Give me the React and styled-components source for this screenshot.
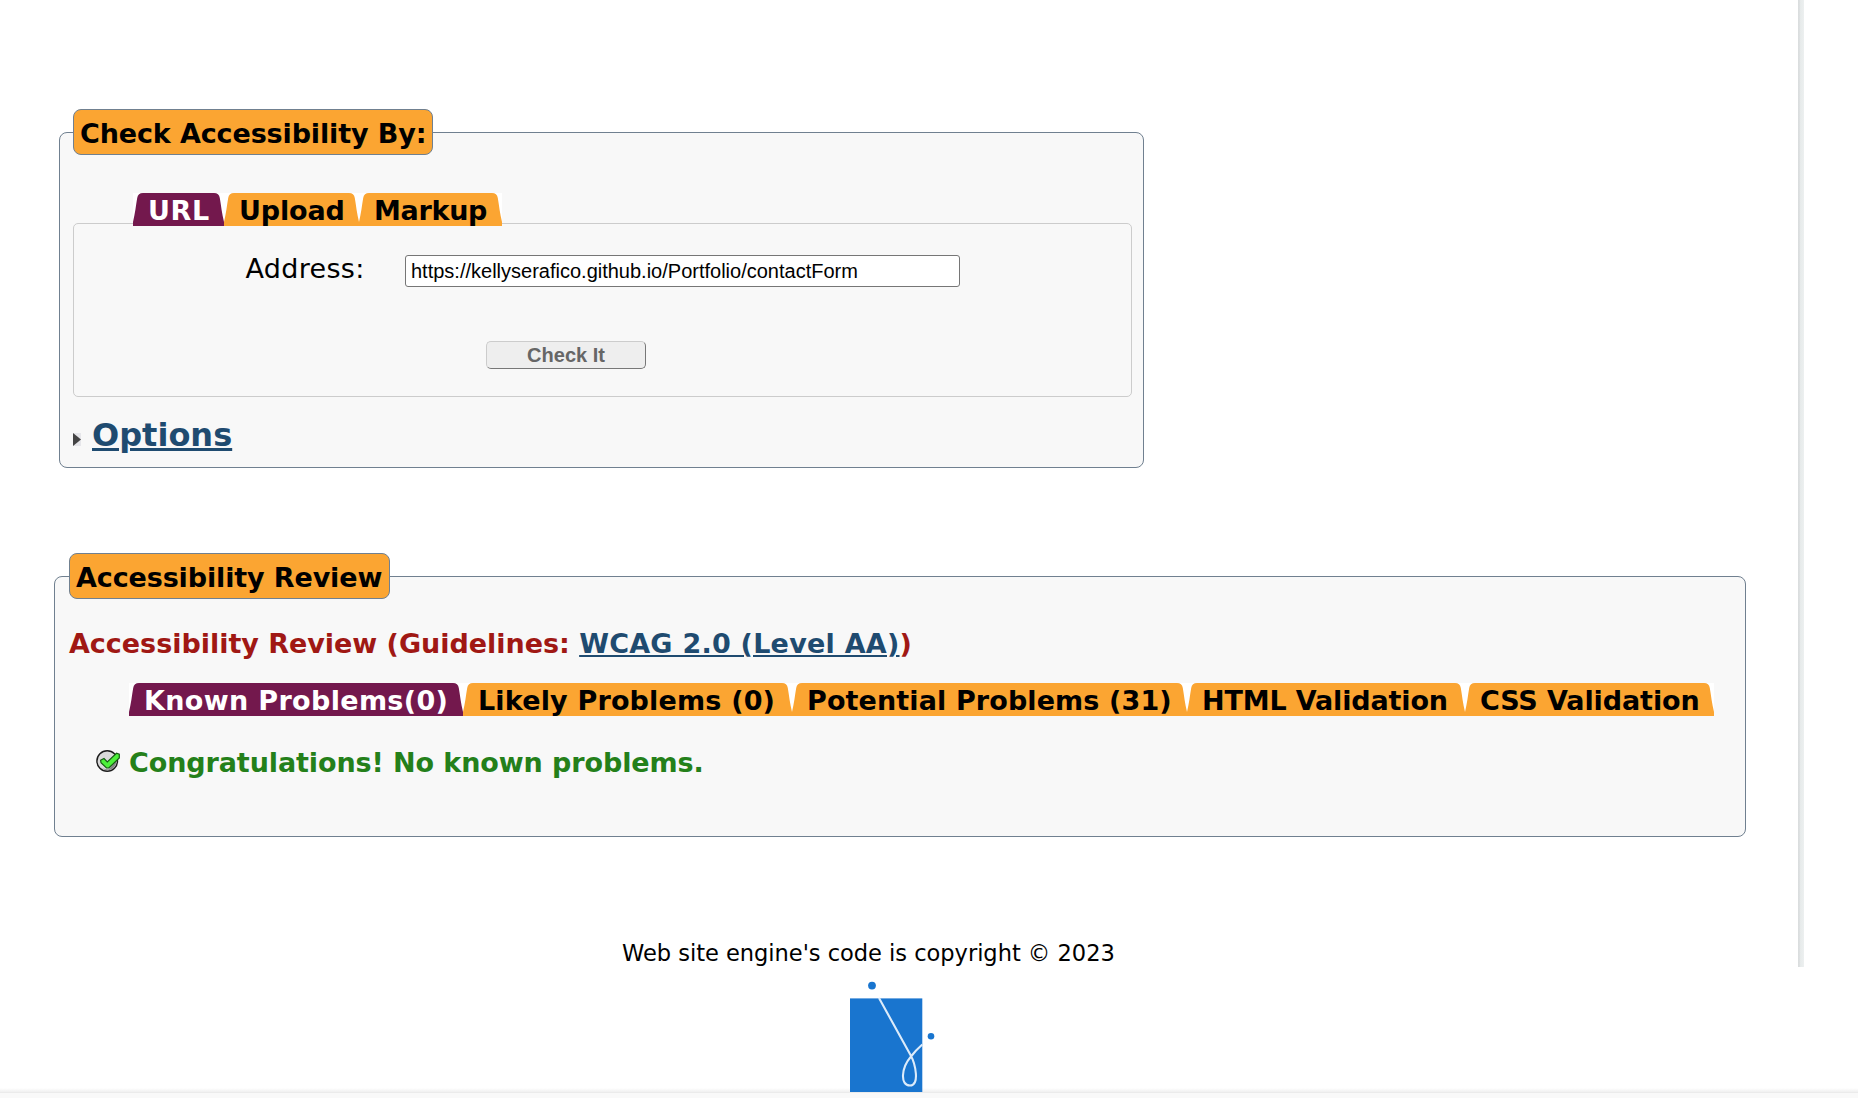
import React from "react";
import styled, { createGlobalStyle } from "styled-components";

const GlobalStyle = createGlobalStyle`
  *, *::before, *::after { box-sizing: border-box; }
  body {
    margin: 0;
    background: #fff;
    color: #000;
    font-family: "DejaVu Sans", sans-serif;
    font-size: 27px;
    overflow: hidden;
  }
`;

const Screen = styled.div`
  display: flex;
  flex-direction: column;
  height: 1098px;
  background: #fff;
`;

const Page = styled.div`
  display: flex;
  flex-direction: column;
  align-items: flex-start;
  width: 1804px;
  height: 967px;
  padding-top: 109px;
  background: linear-gradient(90deg, #d9dcdd, #dfe2e3 2px, #e6eaea 2px, #edf0f0) right / 6px 100% no-repeat;
`;

const Group = styled.fieldset`
  min-width: 0;
  width: ${(p) => p.$width}px;
  height: ${(p) => p.$height}px;
  margin: ${(p) => p.$margin};
  padding: 0 ${(p) => p.$padRight}px 0 ${(p) => p.$padLeft}px;
  background: #f8f8f8;
  border: 1px solid #708090;
  border-radius: 8px;
`;

const Legend = styled.legend`
  width: ${(p) => p.$width}px;
  height: 46px;
  padding: 0 6px;
  background: #fba532;
  border: 1px solid #708090;
  border-radius: 8px;
  font-weight: bold;
  line-height: 47px;
  letter-spacing: -0.13px;
  white-space: nowrap;
`;

const TabBar = styled.nav`
  position: relative;
  display: flex;
  margin: ${(p) => p.$margin};
`;

const TabItem = styled.a`
  display: flex;
  justify-content: space-between;
  width: ${(p) => p.$width}px;
  height: 33px;
  background: #fff;
  color: ${(p) => (p.$active ? "#fff" : "#000")};
  fill: ${(p) => (p.$active ? "#73184d" : "#fba532")};
`;

const TabLabel = styled.span`
  flex: 1;
  width: 0;
  height: 33px;
  padding-left: 5px;
  background: ${(p) => (p.$active ? "#73184d" : "#fba532")};
  font-weight: bold;
  line-height: 35px;
  letter-spacing: ${(p) => p.$spacing || 0}px;
  white-space: nowrap;
`;

const Cap = styled.svg`
  flex: none;
  width: 10px;
  height: 33px;
  transform: ${(p) => (p.$flip ? "scaleX(-1)" : "none")};
`;

const Panel = styled.div`
  display: flex;
  flex-direction: column;
  align-items: flex-start;
  height: 174px;
  padding-top: 31px;
  border: 1px solid #ccc;
  border-radius: 5px;
`;

const Field = styled.label`
  display: flex;
  align-items: center;
  margin-left: 171.5px;
  letter-spacing: 0.3px;
`;

const FieldName = styled.span`
  width: 159.5px;
  height: 32px;
  line-height: 27px;
`;

const TextInput = styled.input`
  width: 555px;
  height: 32px;
  padding: 1px 5px;
  border: 1px solid #767676;
  border-radius: 3px;
  background: #fff;
  color: #000;
  font: 20px "Liberation Sans", Arial, sans-serif;
`;

const CheckButton = styled.button`
  width: 160px;
  height: 28px;
  margin: 54px 0 0 412px;
  padding: 0;
  border: 1px solid;
  border-color: #ccc #777 #777 #ccc;
  border-radius: 5px;
  background: #eee;
  color: #666;
  font: bold 20px/26px "Liberation Sans", Arial, sans-serif;
`;

const OptionsRow = styled.div`
  display: flex;
  align-items: center;
  gap: 11px;
  margin-top: 19px;
`;

const Arrow = styled.svg`
  width: 8px;
  height: 13px;
  margin-top: 8px;
`;

const Link = styled.a`
  color: #1f4b70;
  font-weight: bold;
  font-size: ${(p) => p.$size || 27}px;
  letter-spacing: ${(p) => p.$spacing || 0}px;
  text-decoration: underline;
  text-decoration-thickness: ${(p) => p.$line}px;
  text-underline-offset: ${(p) => p.$offset}px;
`;

const ReviewTitle = styled.h3`
  margin: 29px 0 0;
  color: #a01814;
  font-size: 27px;
  font-weight: bold;
  line-height: 32px;
  letter-spacing: -0.03px;
  white-space: nowrap;
`;

const Result = styled.div`
  display: flex;
  align-items: center;
  gap: 9px;
  height: 32px;
  margin: 30px 0 0 27px;
  color: #24801a;
  font-weight: bold;
  letter-spacing: -0.1px;
  white-space: nowrap;
`;

const CheckIcon = styled.svg`
  width: 24px;
  height: 22px;
  margin-top: -3px;
`;

const Copyright = styled.p`
  margin: 102px 0 0 622px;
  font-size: 22.56px;
  line-height: 28px;
  letter-spacing: -0.03px;
  white-space: nowrap;
`;

const LogoArea = styled.footer`
  height: 125px;
  padding: 13px 0 0 850px;
  background: linear-gradient(#fff, #f0f0f0) bottom / 100% 4px no-repeat;
`;

const Logo = styled.svg`
  display: block;
  width: 90px;
  height: 112px;
`;

const BottomStrip = styled.div`
  flex: none;
  height: 6px;
  background: #f9f9f9;
  border-top: 1px solid #ebebeb;
`;

function TabButton({ label, width, spacing, active }) {
  const edge = "M0 33V29C2 21 3 12 4.2 5Q5 0 10 0V33Z";
  return (
    <TabItem $width={width} $active={active}>
      <Cap viewBox="0 0 10 33"><path d={edge} /></Cap>
      <TabLabel $active={active} $spacing={spacing}>{label}</TabLabel>
      <Cap viewBox="0 0 10 33" $flip><path d={edge} /></Cap>
    </TabItem>
  );
}

const inputTabs = [
  { label: "URL", width: 91, spacing: 0.6, active: true },
  { label: "Upload", width: 135, spacing: -0.15 },
  { label: "Markup", width: 143, spacing: -0.3 },
];

const resultTabs = [
  { label: "Known Problems(0)", width: 334, spacing: 0.34, active: true },
  { label: "Likely Problems (0)", width: 329, spacing: 0.17 },
  { label: "Potential Problems (31)", width: 395, spacing: 0.11 },
  { label: "HTML Validation", width: 278, spacing: -0.15 },
  { label: "CSS Validation", width: 249, spacing: -0.1 },
];

export default function App() {
  return (
    <Screen>
      <GlobalStyle />
      <Page>
        <Group $width={1085} $height={359} $margin="0 0 0 59px" $padLeft={13} $padRight={11}>
          <Legend $width={360}>Check Accessibility By:</Legend>
          <TabBar $margin="38px 0 -3px 60px">
            {inputTabs.map((t) => <TabButton key={t.label} {...t} />)}
          </TabBar>
          <Panel>
            <Field>
              <FieldName>Address:</FieldName>
              <TextInput defaultValue="https://kellyserafico.github.io/Portfolio/contactForm" />
            </Field>
            <CheckButton>Check It</CheckButton>
          </Panel>
          <OptionsRow>
            <Arrow viewBox="0 0 8 13">
              <path fill="#e6e6ea" d="M0 0H8V13H0Z" />
              <path fill="#444" d="M0 0L8 6.5L0 13Z" />
            </Arrow>
            <Link $size={32} $line={3} $offset={2}>Options</Link>
          </OptionsRow>
        </Group>

        <Group $width={1692} $height={284} $margin="85px 0 0 54px" $padLeft={14} $padRight={14}>
          <Legend $width={321}>Accessibility Review</Legend>
          <ReviewTitle>
            Accessibility Review (Guidelines:{" "}
            <Link $line={2} $offset={2} $spacing={0.24}>WCAG 2.0 (Level AA)</Link>)
          </ReviewTitle>
          <TabBar $margin="23px 0 0 60px">
            {resultTabs.map((t) => <TabButton key={t.label} {...t} />)}
          </TabBar>
          <Result>
            <CheckIcon viewBox="0 0 24 22">
              <circle cx="11.2" cy="11" r="10.3" fill="#dadada" stroke="#1c1c1c" strokeWidth="1.4" />
              <path d="M6 18.5Q12 22 17 18.5Q20.5 15 20.5 10.5L12.5 19.5Z" fill="#858585" />
              <path d="M4.6 10.2L8 8.5L11.3 12L20.5 3.2L23.3 4.2V8L12.8 18H10.5L5 12.8Z" fill="#4df03a" stroke="#155d12" strokeWidth="1.2" />
            </CheckIcon>
            Congratulations! No known problems.
          </Result>
        </Group>

        <Copyright>Web site engine's code is copyright © 2023</Copyright>
      </Page>
      <LogoArea>
        <Logo viewBox="0 0 90 112">
          <rect x="0" y="18.4" width="72.3" height="94" fill="#1975cf" />
          <circle cx="22" cy="5.6" r="3.9" fill="#1975cf" />
          <circle cx="81" cy="56.3" r="3.3" fill="#1975cf" />
          <path d="M29 18L60.5 75C65.5 84 70 105.5 60 105.5C50 105.5 51 88 61 76.5Q66 70 72.3 64.5" fill="none" stroke="#dcebfa" strokeWidth="2.1" />
        </Logo>
      </LogoArea>
      <BottomStrip />
    </Screen>
  );
}
